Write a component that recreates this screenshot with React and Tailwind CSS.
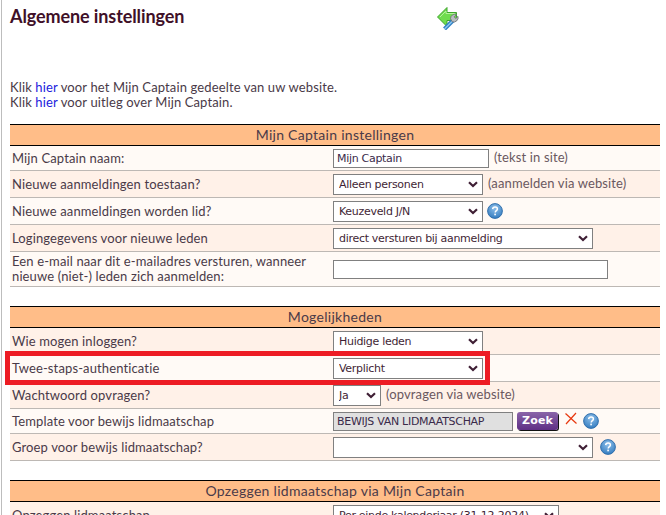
const SETTINGS_FONT = "font-['Lato','Liberation_Sans',sans-serif]";
const FIELD_FONT = "font-['DejaVu_Sans','Liberation_Sans',sans-serif]";

const HelpIcon = () => (
    <svg width="16" height="16" viewBox="0 0 16 16" className="shrink-0">
        <defs>
            <radialGradient id="helpFill" cx="50%" cy="30%" r="75%">
                <stop offset="0%" stopColor="#8fc0ea" />
                <stop offset="100%" stopColor="#2f78bd" />
            </radialGradient>
        </defs>
        <circle cx="8" cy="8" r="7.4" fill="url(#helpFill)" stroke="#2a6aa8" strokeWidth="0.9" />
        <path d="M5.7 6.1c.1-1.4 1-2.1 2.4-2.1 1.4 0 2.3.8 2.3 1.9 0 1.7-2.2 1.8-2.2 3.6" fill="none" stroke="#fff" strokeWidth="1.5" />
        <rect x="7.3" y="10.6" width="1.6" height="1.7" fill="#fff" />
    </svg>
);

const BackIcon = () => (
    <svg width="24" height="24" viewBox="0 0 24 24">
        <path d="M1.5 11L11 1.5 V6.5 H20.5 V14.5 H11 V20.5 Z" fill="#6fdc4e" stroke="#3ea52c" strokeWidth="1" />
        <path d="M4 11L10 5V7.5H19" fill="none" stroke="#b5f29c" strokeWidth="1" />
        <path d="M8.5 23L17 14.5" stroke="#2f7fc4" strokeWidth="4" />
        <path d="M8.5 23L17 14.5" stroke="#8cc8f0" strokeWidth="1.4" />
        <path d="M14.5 12.5a4.5 4.5 0 0 1 6-4l-2.4 2.3 1.6 1.7 2.3-2.2a4.5 4.5 0 0 1-5.8 5.5z" fill="#b9bdc0" stroke="#6b7074" strokeWidth="0.8" />
    </svg>
);

const Field = ({ className = "", ...props }) => (
    <input
        readOnly
        className={`h-[19px] border border-[#808080] px-[3px] text-[11px] tracking-[-0.3px] text-[#3a2a4a] outline-none ${FIELD_FONT} ${className}`}
        {...props}
    />
);

const Choice = ({ value, className = "" }) => (
    <span className={`relative block h-[21px] ${className}`}>
        <select
            defaultValue={value}
            className={`h-full w-full appearance-none border border-[#808080] bg-white pl-[5px] text-[11px] tracking-[-0.3px] text-[#3f1f35] ${FIELD_FONT}`}
        >
            <option>{value}</option>
        </select>
        <svg width="10" height="7" viewBox="0 0 10 7" className="pointer-events-none absolute right-[5px] top-[7px]">
            <path d="M1 1.2L5 5L9 1.2" fill="none" stroke="#3f1f35" strokeWidth="2.2" />
        </svg>
    </span>
);

const Note = ({ children }) => <span className="ml-[5px] text-[#6a5860]">{children}</span>;

const Row = ({ label, dark, height, children }) => (
    <div className={`flex items-center border-b border-[#bdb8b4] ${dark ? "bg-[#fff1e8]" : "bg-[#fffaf6]"} ${height}`}>
        <div className="w-[323px] shrink-0 pl-[2px] leading-[15px]">{label}</div>
        <div className="flex items-center">{children}</div>
    </div>
);

const SectionHeader = ({ children }) => (
    <div className="flex h-[22px] items-center justify-center border-y border-black bg-[#ffbd88] pb-[1px] text-[14px] tracking-[0.28px]">
        {children}
    </div>
);

export default function App() {
    return (
        <div className={`relative h-[515px] w-[666px] overflow-hidden bg-white text-[13px] tracking-[0.125px] text-[#4a3a48] ${SETTINGS_FONT}`}>
            <div className="ml-[1px] h-full border-l border-[#bdbdbd] pl-[8px] pr-[6px]">
                <div className="flex h-[80px] items-start pt-[5px]">
                    <h1 className="w-[426px] text-[18px] font-bold leading-[22px] tracking-[-0.1px] text-[#3f1028]">Algemene instellingen</h1>
                    <div className="mt-[1px]"><BackIcon /></div>
                </div>
                <p className="leading-[15px]">
                    Klik <span className="text-[#2222dd]">hier</span> voor het Mijn Captain gedeelte van uw website.
                </p>
                <p className="leading-[15px]">
                    Klik <span className="text-[#2222dd]">hier</span> voor uitleg over Mijn Captain.
                </p>

                <div className="mt-[14px]">
                    <SectionHeader>Mijn Captain instellingen</SectionHeader>
                    <Row label="Mijn Captain naam:" height="h-[25px]">
                        <Field defaultValue="Mijn Captain" className="w-[156px] bg-white" />
                        <Note>(tekst in site)</Note>
                    </Row>
                    <Row label="Nieuwe aanmeldingen toestaan?" dark height="h-[27px]">
                        <Choice value="Alleen personen" className="w-[150px]" />
                        <Note>(aanmelden via website)</Note>
                    </Row>
                    <Row label="Nieuwe aanmeldingen worden lid?" height="h-[27px]">
                        <Choice value="Keuzeveld J/N" className="w-[150px]" />
                        <span className="ml-[4px]"><HelpIcon /></span>
                    </Row>
                    <Row label="Logingegevens voor nieuwe leden" dark height="h-[27px]">
                        <Choice value="direct versturen bij aanmelding" className="w-[260px]" />
                    </Row>
                    <Row label={<>Een e-mail naar dit e-mailadres versturen, wanneer<br />nieuwe (niet-) leden zich aanmelden:</>} height="h-[35px]">
                        <Field className="w-[275px] bg-white" />
                    </Row>
                </div>

                <div className="mt-[19px]">
                    <SectionHeader>Mogelijkheden</SectionHeader>
                    <Row label="Wie mogen inloggen?" dark height="h-[27px]">
                        <Choice value="Huidige leden" className="w-[150px]" />
                    </Row>
                    <Row label="Twee-staps-authenticatie" height="h-[27px]">
                        <Choice value="Verplicht" className="w-[150px]" />
                    </Row>
                    <Row label="Wachtwoord opvragen?" dark height="h-[27px]">
                        <Choice value="Ja" className="w-[48px]" />
                        <Note>(opvragen via website)</Note>
                    </Row>
                    <Row label="Template voor bewijs lidmaatschap" height="h-[25px]">
                        <Field defaultValue="BEWIJS VAN LIDMAATSCHAP" className="w-[180px] bg-[#e0e0e0]" />
                        <button className="ml-[4px] h-[18px] w-[41px] rounded-[3px] bg-gradient-to-b from-[#8a64a8] to-[#5f2f85] text-[11px] font-bold leading-[16px] text-white shadow-[1px_1px_0_#111] font-['DejaVu_Sans',sans-serif]">
                            Zoek
                        </button>
                        <svg width="14" height="14" viewBox="0 0 14 14" className="ml-[6px] -mt-[4px]">
                            <path d="M1.5 1.5L12.5 11.5M12 1L2 12" stroke="#e8380f" strokeWidth="1.2" fill="none" />
                        </svg>
                        <span className="ml-[5px]"><HelpIcon /></span>
                    </Row>
                    <Row label="Groep voor bewijs lidmaatschap?" dark height="h-[27px]">
                        <Choice value="" className="w-[260px]" />
                        <span className="ml-[7px]"><HelpIcon /></span>
                    </Row>
                </div>

                <div className="mt-[19px]">
                    <SectionHeader>Opzeggen lidmaatschap via Mijn Captain</SectionHeader>
                    <Row label="Opzeggen lidmaatschap" dark height="h-[27px]">
                        <Choice value="Per einde kalenderjaar (31-12-2024)" className="w-[226px]" />
                    </Row>
                </div>
            </div>

            {/* rode markering over de rij */}
            <div className="absolute left-[5px] top-[351px] h-[34px] w-[485px] border-[5px] border-[#ed1c24]" />
        </div>
    );
}
